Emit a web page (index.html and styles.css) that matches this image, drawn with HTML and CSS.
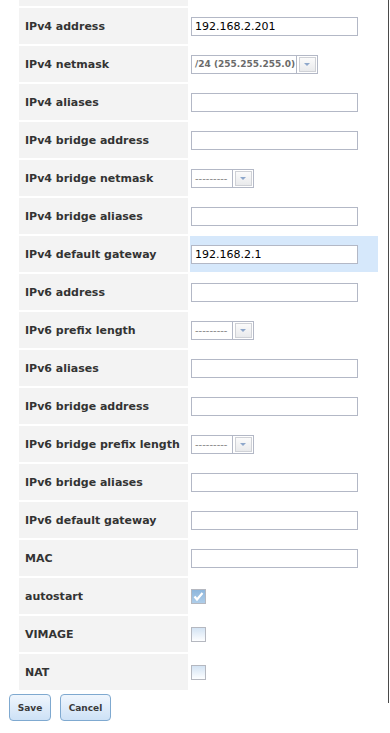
FILE: index.html
```html
<!DOCTYPE html>
<html>
<head>
<meta charset="utf-8">
<link rel="stylesheet" href="styles.css">
</head>
<body>
<div class="frame">
  <div class="form">
    <div class="row"><div class="label"></div><div class="field"></div></div>
    <div class="row"><div class="label">IPv4 address</div><div class="field"><input class="text" type="text" value="192.168.2.201"></div></div>
    <div class="row"><div class="label">IPv4 netmask</div><div class="field"><div class="select wide"><span class="sel-text">/24 (255.255.255.0)</span><span class="sel-btn"><span class="arrow"></span></span></div></div></div>
    <div class="row"><div class="label">IPv4 aliases</div><div class="field"><input class="text" type="text"></div></div>
    <div class="row"><div class="label">IPv4 bridge address</div><div class="field"><input class="text" type="text"></div></div>
    <div class="row"><div class="label">IPv4 bridge netmask</div><div class="field"><div class="select"><span class="sel-text dash">---------</span><span class="sel-btn"><span class="arrow"></span></span></div></div></div>
    <div class="row"><div class="label">IPv4 bridge aliases</div><div class="field"><input class="text" type="text"></div></div>
    <div class="row active"><div class="label">IPv4 default gateway</div><div class="field"><input class="text" type="text" value="192.168.2.1"></div></div>
    <div class="row"><div class="label">IPv6 address</div><div class="field"><input class="text" type="text"></div></div>
    <div class="row"><div class="label">IPv6 prefix length</div><div class="field"><div class="select"><span class="sel-text dash">---------</span><span class="sel-btn"><span class="arrow"></span></span></div></div></div>
    <div class="row"><div class="label">IPv6 aliases</div><div class="field"><input class="text" type="text"></div></div>
    <div class="row"><div class="label">IPv6 bridge address</div><div class="field"><input class="text" type="text"></div></div>
    <div class="row"><div class="label">IPv6 bridge prefix length</div><div class="field"><div class="select"><span class="sel-text dash">---------</span><span class="sel-btn"><span class="arrow"></span></span></div></div></div>
    <div class="row"><div class="label">IPv6 bridge aliases</div><div class="field"><input class="text" type="text"></div></div>
    <div class="row"><div class="label">IPv6 default gateway</div><div class="field"><input class="text" type="text"></div></div>
    <div class="row"><div class="label">MAC</div><div class="field"><input class="text" type="text"></div></div>
    <div class="row"><div class="label">autostart</div><div class="field"><span class="check checked"><svg width="13" height="13" viewBox="0 0 13 13"><path d="M2.5 6.5 L5 9.5 L10.5 3" fill="none" stroke="#fff" stroke-width="2.2"/></svg></span></div></div>
    <div class="row"><div class="label">VIMAGE</div><div class="field"><span class="check"></span></div></div>
    <div class="row"><div class="label">NAT</div><div class="field"><span class="check"></span></div></div>
  </div>
  <div class="buttons">
    <button class="btn save">Save</button>
    <button class="btn cancel">Cancel</button>
  </div>
</div>
</body>
</html>
```
FILE: styles.css
```css
html, body {
  margin: 0;
  padding: 0;
  background: #fff;
  overflow: hidden;
}
body {
  font-family: "DejaVu Sans", Verdana, sans-serif;
  width: 390px;
  height: 733px;
}
.frame {
  width: 388px;
  height: 733px;
  border-right: 1px solid #4a4a4a;
  box-sizing: content-box;
}
.form {
  display: flex;
  flex-direction: column;
  gap: 2px;
  margin-top: -30px;
  padding-left: 19px;
}
.row {
  display: flex;
  gap: 2px;
  height: 36px;
}
.label {
  width: 169px;
  background: #f3f3f3;
  color: #333;
  font-weight: bold;
  font-size: 11px;
  padding-left: 6px;
  box-sizing: border-box;
  display: flex;
  align-items: center;
  white-space: nowrap;
}
.field {
  width: 188px;
  display: flex;
  align-items: center;
  padding-left: 1px;
  box-sizing: border-box;
}
.row.active .field {
  background: #d6e8fb;
}
.text {
  width: 167px;
  height: 19px;
  box-sizing: border-box;
  border: 1px solid #b3b8c6;
  background: #fff;
  margin: 0;
  padding: 0 3px;
  font-family: "DejaVu Sans", Verdana, sans-serif;
  font-size: 11px;
  color: #000;
  outline: none;
}
.select {
  display: flex;
  height: 19px;
  border: 1px solid #b3b8c6;
  box-sizing: border-box;
  background: #fff;
}
.sel-text {
  width: 41px;
  border-right: 1px solid #b3b8c6;
  font-size: 9px;
  font-weight: bold;
  color: #6a6a6a;
  display: flex;
  align-items: center;
  padding-left: 3px;
  box-sizing: border-box;
  white-space: nowrap;
}
.select.wide .sel-text {
  width: 105px;
}
.sel-text.dash {
  color: #8a8a8a;
  font-weight: normal;
  letter-spacing: 0;
  font-size: 10px;
}
.sel-btn {
  width: 20px;
  display: flex;
  align-items: center;
  justify-content: center;
  padding: 1px;
  box-sizing: border-box;
}
.sel-btn .arrow {
  width: 17px;
  height: 15px;
  box-sizing: border-box;
  border: 1px solid #cfd1d6;
  background: linear-gradient(#fbfbfb, #e9eaec);
  display: flex;
  align-items: center;
  justify-content: center;
}
.sel-btn .arrow::after {
  content: "";
  border-left: 3px solid transparent;
  border-right: 3px solid transparent;
  border-top: 3px solid #8ea7cb;
}
.check {
  display: flex;
  align-items: center;
  justify-content: center;
  width: 15px;
  height: 15px;
  box-sizing: border-box;
  border: 1px solid #b5b8c0;
  background: linear-gradient(#d3e3f3, #fdfeff);
}
.check.checked {
  background: linear-gradient(#8db6dc, #aecde9);
}
.buttons {
  display: flex;
  gap: 9px;
  padding-left: 9px;
  margin-top: 4px;
}
.btn {
  height: 27px;
  box-sizing: border-box;
  border: 1px solid #7fa9d0;
  border-radius: 4px;
  background: linear-gradient(#f0f6fd, #cde1f6);
  font-family: "DejaVu Sans", Verdana, sans-serif;
  font-weight: bold;
  font-size: 9px;
  color: #3a3a3a;
  padding: 0;
  margin: 0;
}
.save { width: 42px; }
.cancel { width: 51px; }
```
